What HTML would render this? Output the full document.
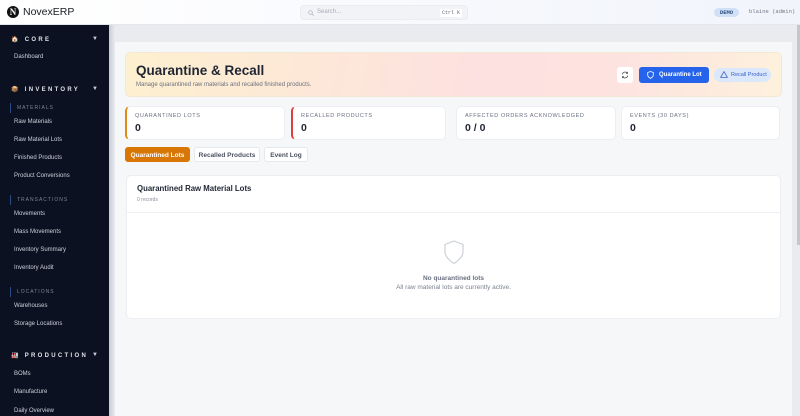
<!DOCTYPE html>
<html><head><meta charset="utf-8"><style>
*{box-sizing:border-box;margin:0;padding:0}
body{width:800px;height:416px;overflow:hidden;font-family:"Liberation Sans",sans-serif;background:#e9ebef;position:relative}
.hdr{position:absolute;left:0;top:0;width:800px;height:25px;background:linear-gradient(90deg,#fff,#f1f4fb);border-bottom:1px solid #e3e6ec}
.logo{position:absolute;left:7px;top:6px;width:12px;height:12px;border-radius:50%;background:#111;color:#fff;font:bold 9px "Liberation Serif",serif;text-align:center;line-height:12px}
.brand{position:absolute;left:23px;top:6px;font-size:10.5px;color:#1a1d24}
.search{position:absolute;left:300px;top:5px;width:168px;height:15px;border-radius:4px;background:#f1f3f6;border:1px solid #e9ecf0}
.search span{position:absolute;left:16px;top:3px;font-size:6px;color:#aab}
.kbd{position:absolute;right:5px;top:3px;font:5px "Liberation Mono",monospace;background:#fff;color:#667;padding:1px 2px}
.demo{position:absolute;left:714px;top:8px;width:25px;height:9px;border-radius:5px;background:#cfe0f7;color:#2d4f80;font:bold 5.5px "Liberation Mono",monospace;text-align:center;line-height:9px}
.user{position:absolute;left:749px;top:8px;font:5.5px "Liberation Mono",monospace;color:#778}
.sb{position:absolute;left:0;top:25px;width:109px;height:391px;background:#0b1120;color:#d5d9e2;font-size:6px}
.sb div{position:absolute}
.sec{left:11px;font-size:6px;font-weight:bold;letter-spacing:2.3px;color:#dfe3ea}
.arr{left:92px;font-size:6px;color:#ccd}
.it{left:14px;color:#cbd0da}
.sub{left:10px;border-left:1px solid #2a4a80;padding-left:6px;font-size:5px;letter-spacing:1px;color:#7b8496;height:10px;line-height:10px}
.shadow{position:absolute;left:109px;top:25px;width:6px;height:391px;background:linear-gradient(90deg,#c9ccd3,#e9ebef)}
.main{position:absolute;left:115px;top:42px;width:677px;height:374px;background:#f6f7f9}
.scroll{position:absolute;left:797px;top:25px;width:3px;height:220px;background:#c4c6cb}
.banner{position:absolute;left:125px;top:52px;width:657px;height:45px;border-radius:5px;background:linear-gradient(100deg,#fdf0cf,#fde0e0 55%,#fde3e0 75%,#fdf1dc);border:1px solid #f3e8d6}
.banner h1{position:absolute;left:10px;top:10px;font-size:13.5px;color:#1f2533}
.banner p{position:absolute;left:10px;top:29px;font-size:6px;color:#6c7080}
.rf{position:absolute;left:617px;top:67px;width:16px;height:16px;background:#fff;border-radius:3px}
.ql{position:absolute;left:639px;top:67px;width:70px;height:16px;background:#2563eb;border-radius:3px;color:#fff;font-size:6px;font-weight:bold;line-height:16px;padding-left:20px}
.rp{position:absolute;left:714px;top:68px;width:57px;height:14px;background:#dbe7fb;border-radius:7px;color:#3d63c9;font-size:5.5px;line-height:14px;padding-left:17px}
.card{position:absolute;top:106px;height:34px;background:#fff;border-radius:5px;border:1px solid #eceef2}
.card .l{position:absolute;left:8px;top:6px;font-size:5.5px;letter-spacing:.6px;color:#6b7080}
.card .v{position:absolute;left:8px;top:15px;font-size:10.5px;font-weight:bold;color:#1f2533}
.tab{position:absolute;top:147px;height:15px;border-radius:3px;font-size:6.5px;font-weight:bold;line-height:15px;text-align:center;background:#fff;color:#4b5060;border:1px solid #e6e8ec}
.big{position:absolute;left:126px;top:175px;width:655px;height:144px;background:#fff;border-radius:5px;border:1px solid #eceef2}
</style></head><body>
<div class="hdr"><div class="logo">N</div><div class="brand">NovexERP</div>
<div class="search"><svg style="position:absolute;left:7px;top:4px" width="6" height="6" viewBox="0 0 6 6"><circle cx="2.5" cy="2.5" r="1.8" fill="none" stroke="#aab" stroke-width=".7"/><path d="M4 4L5.6 5.6" stroke="#aab" stroke-width=".7"/></svg><span>Search...</span><div class="kbd">Ctrl K</div></div>
<div class="demo">DEMO</div><div class="user">blaine (admin)</div></div>
<div class="sb">
<div class="sec" style="top:11px">🏠 CORE</div><div class="arr" style="top:11px">▼</div>
<div class="it" style="top:29px">Dashboard</div>
<div class="sec" style="top:61px">📦 INVENTORY</div><div class="arr" style="top:61px">▼</div>
<div class="sub" style="top:78px">MATERIALS</div>
<div class="it" style="top:94px">Raw Materials</div>
<div class="it" style="top:112px">Raw Material Lots</div>
<div class="it" style="top:130px">Finished Products</div>
<div class="it" style="top:148px">Product Conversions</div>
<div class="sub" style="top:170px">TRANSACTIONS</div>
<div class="it" style="top:186px">Movements</div>
<div class="it" style="top:204px">Mass Movements</div>
<div class="it" style="top:222px">Inventory Summary</div>
<div class="it" style="top:240px">Inventory Audit</div>
<div class="sub" style="top:262px">LOCATIONS</div>
<div class="it" style="top:278px">Warehouses</div>
<div class="it" style="top:296px">Storage Locations</div>
<div class="sec" style="top:327px">🏭 PRODUCTION</div><div class="arr" style="top:327px">▼</div>
<div class="it" style="top:346px">BOMs</div>
<div class="it" style="top:364px">Manufacture</div>
<div class="it" style="top:383px">Daily Overview</div>
</div>
<div class="shadow"></div>
<div class="main"></div>
<div class="scroll"></div>
<div class="banner"><h1>Quarantine &amp; Recall</h1><p>Manage quarantined raw materials and recalled finished products.</p></div>
<div class="rf"><svg style="position:absolute;left:4px;top:4px" width="8" height="8" viewBox="0 0 8 8" fill="none" stroke="#555" stroke-width=".8"><path d="M1.2 3.5A3 3 0 0 1 6.5 2.2M6.8 4.5A3 3 0 0 1 1.5 5.8"/><path d="M6.6 0.8V2.4H5M1.4 7.2V5.6H3"/></svg></div>
<div class="ql"><svg style="position:absolute;left:8px;top:4px" width="7" height="8" viewBox="0 0 7 8"><path d="M3.5 .5L6.3 1.5V4C6.3 5.8 3.5 7.4 3.5 7.4S.7 5.8.7 4V1.5Z" fill="none" stroke="#fff" stroke-width=".8"/></svg>Quarantine Lot</div>
<div class="rp"><svg style="position:absolute;left:6px;top:3px" width="8" height="7" viewBox="0 0 8 7"><path d="M4 .6L7.4 6.4H.6Z" fill="none" stroke="#3d63c9" stroke-width=".8"/></svg>Recall Product</div>
<div class="card" style="left:125px;width:160px;border-left:2px solid #e08a16"><div class="l">QUARANTINED LOTS</div><div class="v">0</div></div>
<div class="card" style="left:291px;width:155px;border-left:2px solid #dc3d3d"><div class="l">RECALLED PRODUCTS</div><div class="v">0</div></div>
<div class="card" style="left:456px;width:160px"><div class="l">AFFECTED ORDERS ACKNOWLEDGED</div><div class="v">0 / 0</div></div>
<div class="card" style="left:621px;width:159px"><div class="l">EVENTS (30 DAYS)</div><div class="v">0</div></div>
<div class="tab" style="left:125px;width:65px;background:#d97706;color:#fff;border-color:#d97706">Quarantined Lots</div>
<div class="tab" style="left:194px;width:66px">Recalled Products</div>
<div class="tab" style="left:264px;width:44px">Event Log</div>
<div class="big">
<div style="position:absolute;left:10px;top:8px;font-size:7.8px;font-weight:bold;color:#1f2533">Quarantined Raw Material Lots</div>
<div style="position:absolute;left:10px;top:21px;font-size:5px;color:#8a8f9c">0 records</div>
<div style="position:absolute;left:0;top:36px;width:653px;height:1px;background:#f0f1f4"></div>
<svg style="position:absolute;left:316px;top:64px" width="22" height="25" viewBox="0 0 22 25"><path d="M11 1L20 4.5V12C20 18 11 23.5 11 23.5S2 18 2 12V4.5Z" fill="none" stroke="#ccd0d8" stroke-width="1.2"/></svg>
<div style="position:absolute;left:0;width:653px;top:99px;text-align:center;font-size:6.5px;font-weight:bold;color:#6b7080">No quarantined lots</div>
<div style="position:absolute;left:0;width:653px;top:108px;text-align:center;font-size:6.5px;color:#7c8190">All raw material lots are currently active.</div>
</div>
</body></html>
